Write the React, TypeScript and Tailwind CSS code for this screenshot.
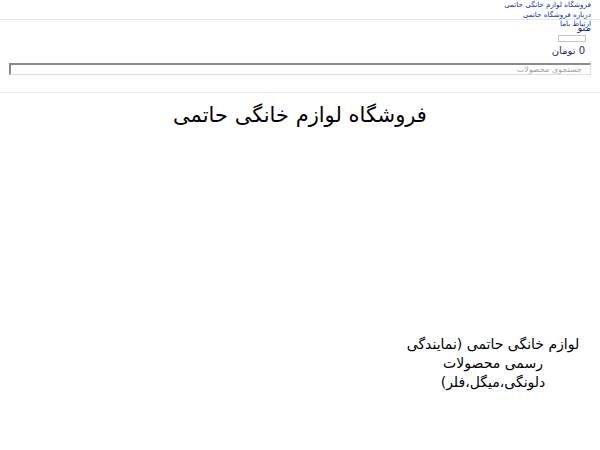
import React from 'react'

const links = ['فروشگاه لوازم خانگی حاتمی', 'درباره فروشگاه حاتمی', 'ارتباط باما']

export default function App() {
  return (
    <div
      dir="rtl"
      className="w-[600px] h-[450px] bg-white overflow-hidden"
      style={{ fontFamily: '"DejaVu Sans", sans-serif' }}
    >
      {/* header */}
      <div className="relative h-[20px] border-b border-[#e6e6e6]">
        <ul className="absolute top-0 right-[9px] text-[7.2px] leading-[9.5px] text-[#2233aa]">
          {links.map((l) => (
            <li key={l}>
              <a href="#">{l}</a>
            </li>
          ))}
        </ul>
      </div>

      <div className="flex flex-col items-start pr-[9px] mt-[2px]">
        <span className="text-[10px] leading-[12px] text-[#1c2a80]">منو</span>
        <div className="mt-[1px] mr-[5px] w-[28px] h-[7px] border border-[#c8c8c8] bg-white" />
        <span className="mt-[2px] mr-[6px] text-[10px] leading-[14px] text-[#1c2a80]">0 تومان</span>
      </div>

      <div className="px-[9px] mt-[5px]">
        <div className="h-[12px] border-t-2 border-l-2 border-r border-b border-t-[#8a8a8a] border-l-[#8a8a8a] border-r-[#e0e0e0] border-b-[#e0e0e0] flex items-center px-[8px]">
          <span className="text-[8px] leading-[10px] text-[#a0a0a0]">جستجوی محصولات</span>
        </div>
      </div>

      <div className="mt-[17px] border-b border-[#ececec]" />

      <h1 className="mt-[8px] text-center text-[21px] leading-[28px] text-black">
        فروشگاه لوازم خانگی حاتمی
      </h1>

      <div className="mt-[206px] flex justify-start pr-[18px]">
        <p className="w-[178px] text-center text-[14px] leading-[19px] text-black">
          لوازم خانگی حاتمی (نمایندگی رسمی محصولات دلونگی،میگل،فلر)
        </p>
      </div>
    </div>
  )
}
